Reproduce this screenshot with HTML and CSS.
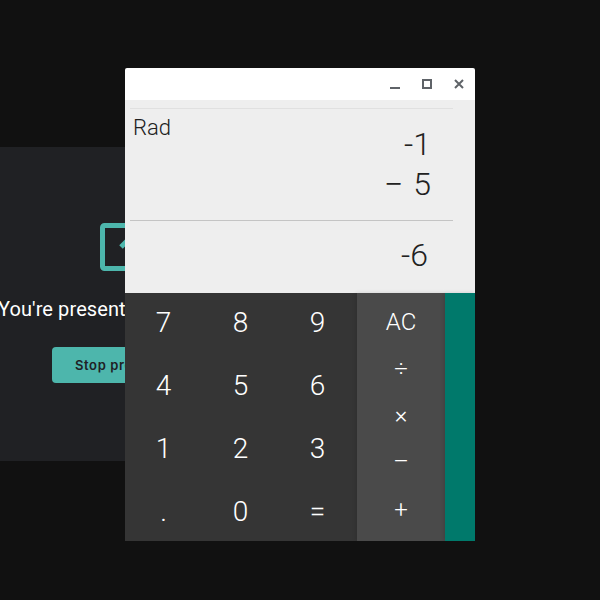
FILE: index.html
```html
<!DOCTYPE html>
<html lang="en">
<head>
<meta charset="utf-8">
<title>Calculator</title>
<link rel="stylesheet" href="styles.css">
</head>
<body>
<section class="present">
  <svg class="present-icon" width="70" height="48" viewBox="0 0 70 48"><rect x="2.5" y="2.5" width="65" height="43" rx="2" fill="none" stroke="#4db6ac" stroke-width="5"/><path d="M21 24l14-14 14 14" fill="none" stroke="#4db6ac" stroke-width="5"/></svg>
  <p class="present-text">You're presenting to everyone</p>
  <button class="present-btn">Stop presenting</button>
</section>
<main class="window">
  <header class="titlebar">
    <svg class="ctl" width="12" height="12" viewBox="0 0 12 12"><rect x="1" y="9" width="10" height="2" fill="#5f6368"/></svg>
    <svg class="ctl" width="12" height="12" viewBox="0 0 12 12"><rect x="2" y="2" width="8" height="8" fill="none" stroke="#5f6368" stroke-width="2"/></svg>
    <svg class="ctl" width="12" height="12" viewBox="0 0 12 12"><path d="M2 2l8 8M10 2l-8 8" stroke="#5f6368" stroke-width="2"/></svg>
  </header>
  <section class="display">
    <div class="expr">
      <span class="rad">Rad</span>
      <div class="operands">
        <div class="num n1">-1</div>
        <div class="num n2"><span class="minus">−</span>5</div>
      </div>
    </div>
    <div class="result">-6</div>
  </section>
  <section class="keypad">
    <div class="digits">
      <span class="key">7</span><span class="key">8</span><span class="key">9</span>
      <span class="key">4</span><span class="key">5</span><span class="key">6</span>
      <span class="key">1</span><span class="key">2</span><span class="key">3</span>
      <span class="key">.</span><span class="key">0</span><span class="key">=</span>
    </div>
    <div class="ops">
      <span class="op ac">AC</span>
      <span class="op div">÷</span>
      <span class="op mul">×</span>
      <span class="op sub">–</span>
      <span class="op add">+</span>
    </div>
    <div class="drawer"></div>
  </section>
</main>
</body>
</html>
```
FILE: styles.css
```css
html, body { margin: 0; height: 100%; }
body { background: #111; position: relative; overflow: hidden; font-family: Roboto, sans-serif; }

.present {
  position: absolute; left: -40px; top: 147px; width: 350px; height: 314px;
  background: #202124; box-sizing: border-box;
  display: flex; flex-direction: column; align-items: center;
}
.present-icon { margin-top: 76px; flex: none; }
.present-text { margin: 25px 10px 0 0; color: #fff; font-size: 20px; line-height: 26px; white-space: nowrap; letter-spacing: .1px; }
.present-btn {
  margin-top: 25px; width: 166px; height: 36px; border: 0; border-radius: 4px; padding: 0 0 0 23px; text-align: left;
  background: #4db6ac; color: #202124; font: 600 13px/36px Inter, sans-serif; letter-spacing: .6px;
}

.window {
  position: absolute; left: 125px; top: 68px; width: 350px; height: 473px;
  display: flex; flex-direction: column; border-radius: 2px 2px 0 0; overflow: hidden;
}
.titlebar {
  flex: none; height: 32px; background: #fff; display: flex; justify-content: flex-end; align-items: center;
  gap: 20px; padding: 0 10px 0 0;
}
.display { flex: none; height: 193px; background: #eee; display: flex; flex-direction: column; padding: 0 22px 0 5px; box-sizing: border-box; }
.expr {
  margin-top: 8px; height: 111px; border-top: 1px solid #e0e0e0; border-bottom: 1px solid #c4c4c4;
  display: flex; justify-content: space-between;
}
.rad { font-weight: 300; font-size: 22px; line-height: 26px; color: #212121; margin: 6px 0 0 3px; }
.operands { margin-right: 22px; text-align: right; }
.num { font-weight: 300; font-size: 32px; line-height: 40px; color: #212121; }
.n1 { margin-top: 15px; }
.minus { font-size: 34px; line-height: 0; vertical-align: -1px; margin-right: 10px; }
.result { font-weight: 300; font-size: 32px; line-height: 40px; color: #212121; text-align: right; margin: 14px 25px 0 0; }

.keypad { flex: 1; min-height: 0; display: flex; }
.digits {
  width: 232px; background: #353535; display: grid;
  grid-template-columns: repeat(3, 77px); grid-template-rows: repeat(4, 63px); align-content: center; justify-items: center; align-items: center;
}
.key { font-weight: 300; font-size: 28px; color: #fff; line-height: 36px; }
.ops {
  width: 88px; background: #4a4a4a; display: flex; flex-direction: column; align-items: center;
  box-shadow: -1px 0 4px rgba(0,0,0,.12);
}
.op { font-weight: 300; font-size: 24px; line-height: 30px; color: #fff; height: 47.5px; }
.ac { margin-top: 14px; }
.div { height: 48px; }
.mul { height: 47px; }
.sub { height: 48px; }
.add { margin-top: 2px; }
.drawer { flex: 1; background: #00796b; box-shadow: -1px 0 4px rgba(0,0,0,.15); }
```
